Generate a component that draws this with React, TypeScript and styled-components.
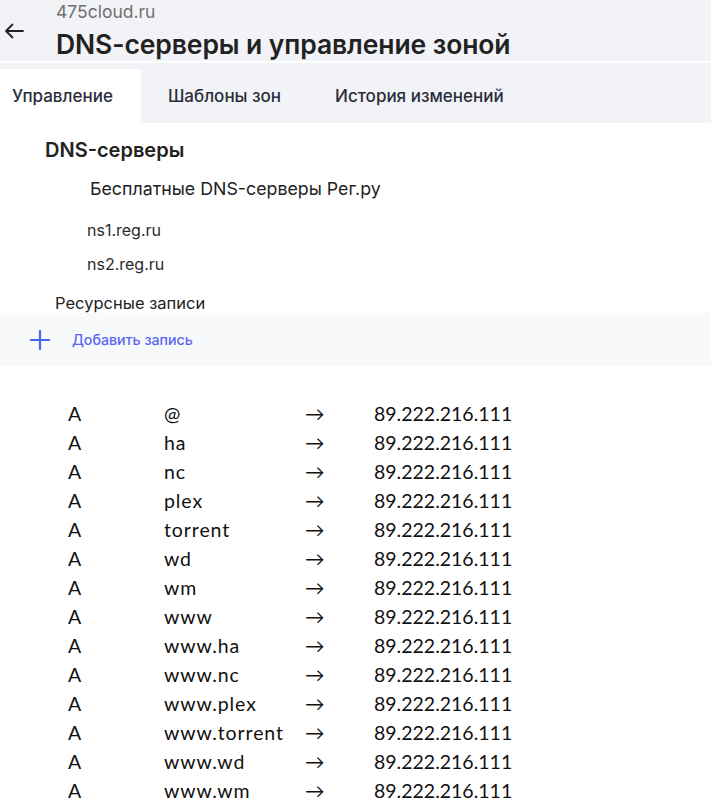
import React from "react";
import styled, { createGlobalStyle } from "styled-components";

type DnsRecord = {
  type: string;
  name: string;
  value: string;
};

const hosts = [
  "@",
  "ha",
  "nc",
  "plex",
  "torrent",
  "wd",
  "wm",
  "www",
  "www.ha",
  "www.nc",
  "www.plex",
  "www.torrent",
  "www.wd",
  "www.wm",
];

const records: DnsRecord[] = hosts.map((name) => ({
  type: "A",
  name,
  value: "89.222.216.111",
}));

const tabs = ["Управление", "Шаблоны зон", "История изменений"];

const App: React.FC = () => {
  return (
    <>
      <GlobalStyle />
      <Page>
        <Header>
          <BackButton aria-label="Назад">
            <svg width="20" height="16" viewBox="0 0 20 16" fill="none">
              <path
                d="M19 8H2M8.5 1.5L2 8l6.5 6.5"
                stroke="#222"
                strokeWidth="1.8"
                strokeLinecap="round"
                strokeLinejoin="round"
              />
            </svg>
          </BackButton>
          <HeaderText>
            <Domain>475cloud.ru</Domain>
            <Title>DNS-серверы и управление зоной</Title>
          </HeaderText>
        </Header>

        <TabBar>
          {tabs.map((tab, i) => (
            <Tab key={tab} active={i === 0}>
              {tab}
            </Tab>
          ))}
        </TabBar>

        <Section>
          <SectionTitle>DNS-серверы</SectionTitle>
          <ServerCaption>Бесплатные DNS-серверы Рег.ру</ServerCaption>
          <ServerList>
            <Server>ns1.reg.ru</Server>
            <Server>ns2.reg.ru</Server>
          </ServerList>
          <RecordsTitle>Ресурсные записи</RecordsTitle>
        </Section>

        <AddBar>
          <svg width="20" height="20" viewBox="0 0 20 20" fill="none">
            <path
              d="M10 1v18M1 10h18"
              stroke="#4766f0"
              strokeWidth="2.2"
              strokeLinecap="round"
            />
          </svg>
          <AddLabel>Добавить запись</AddLabel>
        </AddBar>

        <RecordTable>
          {records.map((r) => (
            <Row key={r.name}>
              <Cell>{r.type}</Cell>
              <Cell wide>{r.name}</Cell>
              <Cell>→</Cell>
              <Cell>{r.value}</Cell>
            </Row>
          ))}
        </RecordTable>
      </Page>
    </>
  );
};

const GlobalStyle = createGlobalStyle`
  html, body {
    margin: 0;
    padding: 0;
    background: #fff;
  }
  body {
    font-family: Inter, "Noto Sans", sans-serif;
    color: #222;
  }
`;

const Page = styled.div`
  width: 711px;
  display: flex;
  flex-direction: column;
`;

const Header = styled.header`
  height: 61px;
  background: #f2f3f7;
  display: flex;
  align-items: flex-start;
  margin-bottom: 2px;
`;

const BackButton = styled.button`
  border: 0;
  background: none;
  padding: 0;
  margin: 23px 0 0 4px;
  width: 22px;
  height: 16px;
  display: flex;
  align-items: center;
  cursor: pointer;
`;

const HeaderText = styled.div`
  display: flex;
  flex-direction: column;
  margin-left: 30px;
`;

const Domain = styled.div`
  font-size: 17.5px;
  line-height: 22px;
  margin-top: 1px;
  color: #707070;
`;

const Title = styled.h1`
  margin: 6px 0 0;
  font-size: 26.5px;
  line-height: 30px;
  font-weight: 600;
  color: #222;
  letter-spacing: -0.1px;
`;

const TabBar = styled.nav`
  height: 60px;
  background: #f2f3f7;
  display: flex;
  align-items: flex-end;
`;

const Tab = styled.div<{ active?: boolean }>`
  height: 54px;
  display: flex;
  align-items: center;
  padding: 0 27px;
  background: ${({ active }) => (active ? "#fff" : "transparent")};
  font-size: 17px;
  font-weight: 500;
  color: #2b2d3a;
  &:first-child {
    padding-left: 12px;
    padding-right: 28px;
  }
`;

const Section = styled.section`
  display: flex;
  flex-direction: column;
  padding-top: 16px;
`;

const SectionTitle = styled.h2`
  margin: 0 0 0 45px;
  font-size: 20px;
  line-height: 22px;
  font-weight: 600;
`;

const ServerCaption = styled.div`
  margin: 18px 0 0 90px;
  font-size: 17.8px;
  line-height: 20px;
`;

const ServerList = styled.div`
  display: flex;
  flex-direction: column;
  gap: 15px;
  margin: 22px 0 0 87px;
`;

const Server = styled.div`
  font-size: 16px;
  line-height: 19px;
  color: #2a2a2a;
`;

const RecordsTitle = styled.div`
  margin: 19px 0 0 55px;
  font-size: 16.5px;
  line-height: 20px;
`;

const AddBar = styled.div`
  height: 53px;
  background: #f8f9fb;
  display: flex;
  align-items: center;
  padding-left: 30px;
  gap: 22px;
`;

const AddLabel = styled.span`
  font-size: 14.2px;
  font-weight: 500;
  color: #5a67f2;
`;

const RecordTable = styled.div`
  display: flex;
  flex-direction: column;
  padding: 33px 0 0 68px;
  font-family: Lato, "Liberation Sans", sans-serif;
  font-size: 19.5px;
  color: #111;
`;

const Row = styled.div`
  display: grid;
  grid-template-columns: 96px 141px 69px auto;
  height: 29px;
  align-items: center;
`;

const Cell = styled.span<{ wide?: boolean }>`
  white-space: nowrap;
  letter-spacing: ${({ wide }) => (wide ? "0.9px" : "0")};
`;

export default App;
